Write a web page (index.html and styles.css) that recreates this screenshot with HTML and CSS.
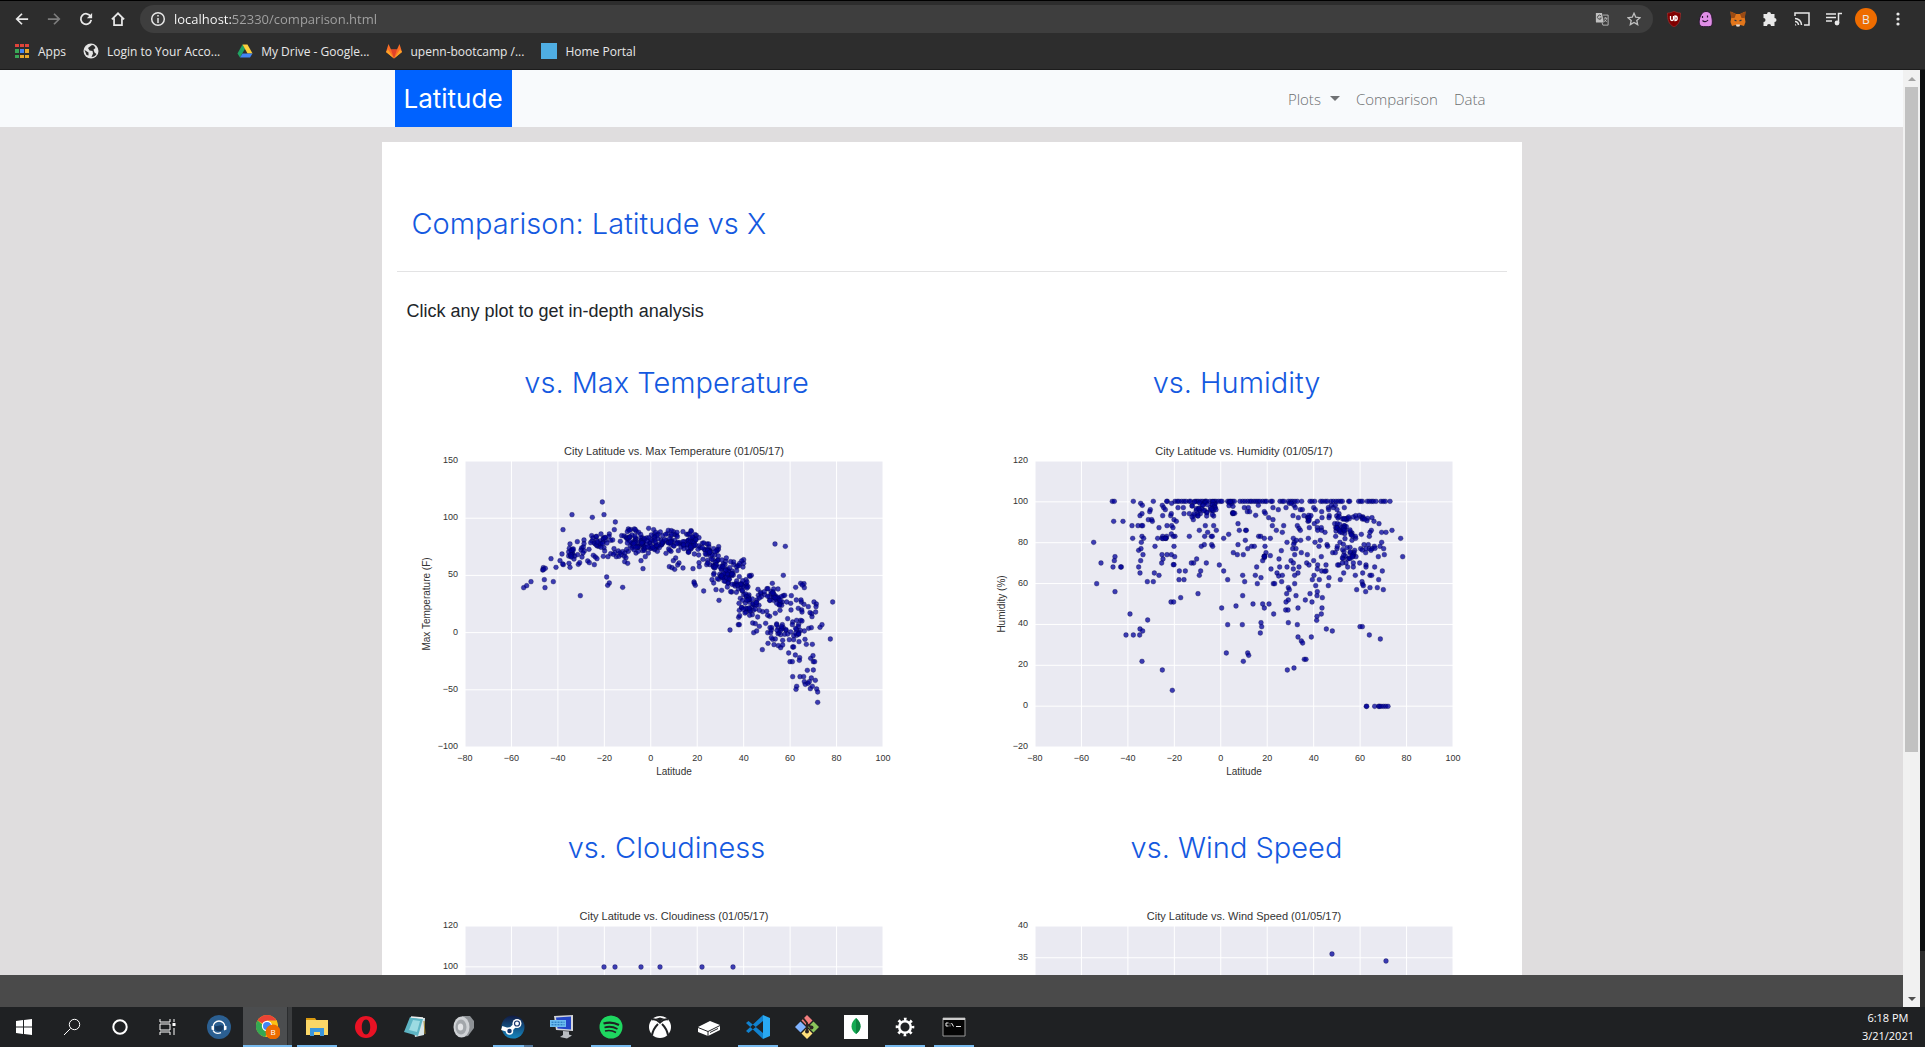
FILE: index.html
```html
<!DOCTYPE html>
<html lang="en">
<head>
<meta charset="utf-8">
<title>Latitude - Comparison</title>
<link rel="stylesheet" href="styles.css">
</head>
<body>
<header class="browser">
  <div class="toolbar">
    <button class="tool" aria-label="Back"><svg viewBox="0 0 16 16"><path d="M15 8H2M8 2L2 8l6 6" class="line"/></svg></button>
    <button class="tool dim" aria-label="Forward"><svg viewBox="0 0 16 16"><path d="M1 8h13M8 2l6 6-6 6" class="line"/></svg></button>
    <button class="tool" aria-label="Reload"><svg viewBox="0 0 16 16"><path d="M13.300 5A6 6 0 1 0 14 9" class="line"/><path d="M15 1v6H9z" fill="currentColor"/></svg></button>
    <button class="tool" aria-label="Home"><svg viewBox="0 0 16 16"><path d="M1 8.500L8 1.500l7 7M3.500 7v8h9V7" class="line"/></svg></button>
    <div class="omnibox">
      <svg class="info" viewBox="0 0 16 16"><circle cx="8" cy="8" r="6.300" class="line"/><path d="M8 7v5M8 4v1.600" class="line"/></svg>
      <input class="url" type="text" aria-label="Address" value="localhost:52330/comparison.html">
      <button class="tool soft" aria-label="Translate"><svg viewBox="0 0 16 16"><path d="M1 1h7l2 11H2a1 1 0 0 1-1-1z" fill="currentColor"/><path d="M9 3.500h6V15H9l-1-3" fill="none" stroke="currentColor"/><path d="M10 7h4M12 6v1M13.500 7c-.5 2-1.500 3-3 4M10.500 8.500l3 3" fill="none" stroke="currentColor"/><path d="M7 4.500A2.300 2.300 0 1 0 7.300 7H5.300" fill="none" stroke="#3c3c3c"/></svg></button>
      <button class="tool soft" aria-label="Bookmark this page"><svg viewBox="0 0 16 16"><path d="M8 1.500l2 4.500 4.800.5-3.600 3.200 1 4.800L8 12l-4.200 2.500 1-4.800L1.200 6.500 6 6z" fill="none" stroke="currentColor" stroke-width="1.500"/></svg></button>
    </div>
    <button class="tool" aria-label="uBlock"><svg viewBox="0 0 16 16"><path d="M8 0c2 1.500 4 2 6.500 2 0 7-1 11-6.500 14C2.500 13 1.500 9 1.500 2 4 2 6 1.500 8 0z" fill="#800000" stroke="#a33" stroke-width=".6"/><path d="M4.500 5v3a1.500 1.500 0 0 0 3 0V5M9 5v4.500a2.200 2.200 0 0 0 0-4.500z" fill="none" stroke="#fff" stroke-width="1.300"/></svg></button>
    <button class="tool" aria-label="Ghost"><svg viewBox="0 0 16 16"><path d="M8 .5c4 0 5.500 3 6 6.500.4 3 1 8-2 8.500-1.500.3-6.500.3-8 0C1 15 1 11 1.500 8 2.500 4 4.500.500 8 .500z" fill="#e08ee6" stroke="#2a1530"/><path d="M4.500 5v2M9.500 4.500v2M4.500 9.500c1.500 1.500 4 1.500 5.500-.5" fill="none" stroke="#2a1530" stroke-width="1.200"/></svg></button>
    <button class="tool" aria-label="MetaMask"><svg viewBox="0 0 16 16"><path d="M.5.5L6 3h4L15.500.500l-.7 6.500.7 4-1.500 4-3.500-1L8 15.800 5.500 14 2 15 .500 11l.7-4z" fill="#e2761b"/><path d="M.500.500L6 3 4.500 7 1.200 7zM15.500.500L10 3l1.500 4 3.300 0z" fill="#9a4a14"/><path d="M6 13.500h4l-.5 2h-3z" fill="#ddd"/><path d="M4.500 9l2 1M11.500 9l-2 1" stroke="#233447" stroke-width="1.300"/></svg></button>
    <button class="tool" aria-label="Extensions"><svg viewBox="0 0 16 16"><path d="M5 3a2 2 0 0 1 4 0h3.500v4a2 2 0 0 1 0 4v4H9a2 2 0 0 0-4 0H1.500v-4a2 2 0 0 0 0-4V3z" fill="currentColor"/></svg></button>
    <button class="tool" aria-label="Cast"><svg viewBox="0 0 16 16"><path d="M1 5V2h14v12h-5M1 7.500A6.500 6.500 0 0 1 7.500 14M1 10.500A3.500 3.500 0 0 1 4.500 14" fill="none" stroke="currentColor" stroke-width="1.500"/><path d="M1 12.500l1.500 2H1z" fill="currentColor"/></svg></button>
    <button class="tool" aria-label="Media"><svg viewBox="0 0 16 16"><path d="M0 3h10M0 6.500h10M0 10h6M12.500 12V2.500H16" fill="none" stroke="currentColor" stroke-width="1.500"/><circle cx="11" cy="12" r="2.400" fill="currentColor"/></svg></button>
    <button class="avatar" aria-label="Profile">B</button>
    <button class="tool" aria-label="Menu"><svg viewBox="0 0 16 16"><g fill="currentColor"><circle cx="8" cy="3" r="1.600"/><circle cx="8" cy="8" r="1.600"/><circle cx="8" cy="13" r="1.600"/></g></svg></button>
  </div>
  <nav class="bookmarks" aria-label="Bookmarks">
    <a href="#"><svg viewBox="0 0 16 16"><path d="M1 1h4v3H1zM6 1h4v3H6zM11 1h4v3h-4z" fill="#e0443a"/><path d="M1 6h4v4H1z" fill="#3aa757"/><path d="M6 6h4v4H6z" fill="#4285f4"/><path d="M11 6h4v4h-4zM11 12h4v3h-4zM6 12h4v3H6z" fill="#e8a92c"/><path d="M1 12h4v3H1z" fill="#3aa757"/></svg>Apps</a>
    <a href="#"><svg viewBox="0 0 16 16"><circle cx="8" cy="8" r="7.500" fill="#e4e4e4"/><path d="M9 2L5 5l1.500 2.500 3 .5.5 2.500L8.500 14c2 0 4-1 5-3l-2-1.500-1-3 2-1.500-1.500-2.500zM1.500 7l4 2.500v3L3.500 12z" fill="#2d2d2d"/></svg>Login to Your Acco...</a>
    <a href="#"><svg viewBox="0 0 16 16"><path d="M5.500 1.500L.500 10.500l2.500 4L8 5.800z" fill="#1fa463"/><path d="M5.500 1.500h5l5 9h-5z" fill="#fdcf3c"/><path d="M5.500 10.500h10l-2.500 4H3z" fill="#4285f4"/></svg>My Drive - Google...</a>
    <a href="#"><svg viewBox="0 0 16 16"><path d="M0 9L2.500 1 5 6.500h6L13.500 1 16 9l-8 6.500z" fill="#fc6d26"/><path d="M5 6.500h6L8 15.500z" fill="#e24329"/><path d="M0 9l8 6.500L2 6.500zM16 9l-8 6.500 6-9z" fill="#fca326"/></svg>upenn-bootcamp /...</a>
    <a href="#"><svg viewBox="0 0 16 16"><path d="M0 0h16v16H0z" fill="#4faee3"/></svg>Home Portal</a>
  </nav>
</header>

<div class="window">
  <div class="page">
    <div class="scroller">
      <nav class="navbar">
        <div class="container navbar-inner">
          <a class="brand" href="#">Latitude</a>
          <div class="links">
            <button class="link caret">Plots</button>
            <a class="link" href="#">Comparison</a>
            <a class="link" href="#">Data</a>
          </div>
        </div>
      </nav>
      <main class="container card">
        <h1>Comparison: Latitude vs X</h1>
        <p>Click any plot to get in-depth analysis</p>
        <div class="plots">
          <section><h2>vs. Max Temperature</h2><a href="#" aria-label="Max Temperature plot"><svg class="plot" id="temperature" viewBox="0 0 540 360"></svg></a></section>
          <section><h2>vs. Humidity</h2><a href="#" aria-label="Humidity plot"><svg class="plot" id="humidity" viewBox="0 0 540 360"></svg></a></section>
          <section><h2>vs. Cloudiness</h2><a href="#" aria-label="Cloudiness plot"><svg class="plot" id="cloudiness" viewBox="0 0 540 360"></svg></a></section>
          <section><h2>vs. Wind Speed</h2><a href="#" aria-label="Wind Speed plot"><svg class="plot" id="wind" viewBox="0 0 540 360"></svg></a></section>
        </div>
      </main>
    </div>
    <footer class="footer"></footer>
  </div>
  <div class="scrollbar"><i class="arrow up"></i><i class="thumb"></i><i class="arrow down"></i></div>
  <div class="edge"></div>
</div>

<footer class="taskbar">
  <div class="system">
    <button aria-label="Start"><svg viewBox="0 0 24 24"><path d="M4 6l7-1v6.500H4zM12 5l8-1v7.500h-8zM4 12.500h7V19l-7-1zM12 12.500h8V20l-8-1z" fill="#fff"/></svg></button>
    <button aria-label="Search"><svg viewBox="0 0 24 24"><circle cx="14.500" cy="9.500" r="5.200" class="thin"/><path d="M10.500 13.500L4 20" class="thin"/></svg></button>
    <button aria-label="Cortana"><svg viewBox="0 0 24 24"><circle cx="12" cy="12" r="6.700" fill="none" stroke="#fff" stroke-width="2"/></svg></button>
    <button aria-label="Task View"><svg viewBox="0 0 24 24"><path d="M4 4v3h10V4M4 9h10v6H4zM4 20v-3h10v3M18 4v3M18 13v7" class="thin"/><path d="M16.500 8h3v3h-3z" fill="#fff"/></svg></button>
  </div>
  <div class="apps">
    <button aria-label="TeamSpeak"><svg viewBox="0 0 24 24"><circle cx="12" cy="12" r="12" fill="#2b5f91"/><path d="M6 12a6 6 0 0 1 12 0" fill="none" stroke="#fff" stroke-width="1.300"/><path d="M4.500 11h2.500v4.500l-2.500-1zM19.500 11H17v4.500l2.500-1z" fill="#fff"/><path d="M8 11c2.500 1 5-2 8 0v3c-1 3-7 3-8 0z" fill="#173a60"/><path d="M6 15.500c2 3 5.500 3.300 8 2.200" fill="none" stroke="#fff" stroke-width="1.300"/></svg></button>
    <button class="active" aria-label="Chrome"><svg viewBox="0 0 24 24"><circle cx="11" cy="11" r="11" fill="#fbc116"/><path d="M11 11L1.500 5.500A11 11 0 0 1 20.500 5.500z" fill="#ea4335"/><path d="M1.500 5.500A11 11 0 0 0 9 22l4-7z" fill="#34a853"/><path d="M11 5.500h10V8H11z" fill="#fbc116"/><circle cx="11" cy="11" r="5.200" fill="#fff"/><circle cx="11" cy="11" r="4" fill="#4285f4"/><circle cx="17" cy="17" r="7.500" fill="#ee6c00"/><text x="17" y="20" text-anchor="middle" class="badge">B</text></svg></button>
    <button class="open" aria-label="File Explorer"><svg viewBox="0 0 24 24"><path d="M1 3h9l2 3h-11z" fill="#d99a10"/><path d="M1 5h22v15H1z" fill="#fbd767"/><path d="M5 13h14v8h-4v-4H9v4H5z" fill="#3a96dd"/></svg></button>
    <button aria-label="Opera"><svg viewBox="0 0 24 24"><path d="M12 1a11 11 0 1 0 0 22 11 11 0 0 0 0-22zm0 3.500c2.500 0 4.200 3.200 4.200 7.500s-1.700 7.500-4.200 7.500S7.800 16.300 7.800 12 9.500 4.500 12 4.500z" fill="#e81224" fill-rule="evenodd"/></svg></button>
    <button aria-label="Notepad"><svg viewBox="0 0 24 24"><path d="M8 2l14 1-1 17-9 2z" fill="#d9e6e8"/><path d="M7 2l13 2-5 17L1 17z" fill="#5eb5c4"/><path d="M10 5l7 1-3 11-8-2z" fill="#9cdbe2"/><path d="M8 2l12 1" stroke="#eee" stroke-width="1.500"/><path d="M21 6l1 13" stroke="#a5882e"/></svg></button>
    <button aria-label="Sound"><svg viewBox="0 0 24 24"><path d="M10 1h8l4 5v7l-6 8-6 1z" fill="#8d9195"/><ellipse cx="9.500" cy="12" rx="8" ry="10.500" fill="#cfd2d5"/><ellipse cx="9" cy="12" rx="5.500" ry="7.500" fill="#a3a7ab"/><ellipse cx="8.500" cy="12" rx="2.700" ry="3.500" fill="#e2e4e6"/></svg></button>
    <button class="open grouped" aria-label="Steam"><svg viewBox="0 0 24 24"><defs><linearGradient id="steam" x2="0" y2="1"><stop stop-color="#111a42"/><stop offset="1" stop-color="#1687c0"/></linearGradient></defs><circle cx="12" cy="12" r="11.500" fill="url(#steam)"/><path d="M.700 13l8 2.500 7-7" fill="none" stroke="#fff" stroke-width="4"/><circle cx="16" cy="8.500" r="4.500" fill="#fff"/><circle cx="16" cy="8.500" r="2.500" fill="#fff" stroke="#16366d" stroke-width="1.200"/><circle cx="8.500" cy="16" r="3" fill="#16366d" stroke="#fff" stroke-width="1.500"/></svg></button>
    <button aria-label="Remote Desktop"><svg viewBox="0 0 24 24"><path d="M4 1l19-1v16l-17-1z" fill="#d4d6da"/><path d="M6 2.500l15-1v13L7.500 13.500z" fill="#2346c8"/><path d="M0 5h16v7H0z" fill="#6cbcf0"/><path d="M1.500 7.200h13M1.500 9.800h13" stroke="#176bb5" stroke-dasharray="2 1"/><path d="M13 16l6 .5v3l3 1-5 3-7-1.500 3-2z" fill="#b9bcc1"/></svg></button>
    <button class="open" aria-label="Spotify"><svg viewBox="0 0 24 24"><circle cx="12" cy="12" r="11.500" fill="#1ed760"/><path d="M4.500 8.500c5-1.500 11-1 15.500 1.500" fill="none" stroke="#1f2123" stroke-width="2.200"/><path d="M5.500 12.500c4-1.200 9-.7 13 1.500" fill="none" stroke="#1f2123" stroke-width="1.800"/><path d="M6 16c3.500-1 7.500-.6 11 1.500" fill="none" stroke="#1f2123" stroke-width="1.500"/></svg></button>
    <button aria-label="Xbox"><svg viewBox="0 0 24 24"><circle cx="12" cy="12" r="11" fill="#fff"/><path d="M4 4.500c3-1 6 1 8 3 2-2 5-4 8-3M10 9C7 12 5 15 4 20M14 9c3 3 5 6 6 11" fill="none" stroke="#1f2123" stroke-width="2"/><path d="M7 4c2 0 4 1.500 5 3.500C13 5.500 15 4 17 4l-5-1.500z" fill="#1f2123"/></svg></button>
    <button aria-label="Drive"><svg viewBox="0 0 24 24"><path d="M1 12l12-6 10 4v5l-12 6-10-4z" fill="#fff"/><path d="M1 12.500l10 4 12-6M11 16.500V21M13 17.500l8-4" fill="none" stroke="#1f2123"/></svg></button>
    <button class="open" aria-label="Visual Studio Code"><svg viewBox="0 0 24 24"><path d="M17 0l7 3v18l-7 3z" fill="#29a9f2"/><path d="M0 8l2.500-2L17 18v6zM0 16l2.500 2L17 6V0z" fill="#1182cf"/></svg></button>
    <button aria-label="Git Bash"><svg viewBox="0 0 24 24"><path d="M12 0l5.500 5.500L12 11 6.500 5.500z" fill="#f27e7e"/><path d="M5.500 6.500L11 12l-5.500 5.500L0 12z" fill="#80b3ff"/><path d="M18.500 6.500L24 12l-5.500 5.500L13 12z" fill="#8bc55b"/><path d="M12 13l5.500 5.500L12 24l-5.500-5.500z" fill="#ffe07c"/><path d="M8 3l4 5v9M12 9l4 3" fill="none" stroke="#2b2321" stroke-width="2"/><circle cx="12" cy="16.500" r="2" fill="#2b2321"/><circle cx="16.500" cy="12.500" r="2" fill="#2b2321"/></svg></button>
    <button aria-label="MongoDB Compass"><svg viewBox="0 0 24 24"><path d="M0 0h24v24H0z" fill="#fff"/><path d="M12 3c3 3 4.500 5 4.500 8.500S14.500 17 12 19c-2.500-2-4.500-4-4.500-7.500S9 6 12 3z" fill="#13aa52"/><path d="M12 3c3 3 4.500 5 4.500 8.500S14.500 17 12 19z" fill="#0c8440"/></svg></button>
    <button class="open" aria-label="Settings"><svg viewBox="0 0 24 24"><circle cx="12" cy="12" r="5.800" fill="none" stroke="#fff" stroke-width="2.500"/><circle cx="12" cy="12" r="7.800" fill="none" stroke="#fff" stroke-width="3" stroke-dasharray="2.600 3.526" stroke-dashoffset="1.300"/></svg></button>
    <button class="open" aria-label="Command Prompt"><svg viewBox="0 0 24 24"><path d="M1 3h22v18H1z" fill="#050505" stroke="#999"/><path d="M1 3h22v2H1z" fill="#ccc"/><path d="M6.500 8H4v3h2.500M8 8.500v.8M8 10.500v.8M9.500 8l2 3.500M14 11.500h5" fill="none" stroke="#eee"/></svg></button>
  </div>
  <div class="clock"><span>6:18 PM</span><span>3/21/2021</span></div>
</footer>
<script src="plots.js"></script>
</body>
</html>
```
FILE: styles.css
```css
* { box-sizing: border-box; }
body {
  margin: 0;
  height: 100vh;
  display: flex;
  flex-direction: column;
  overflow: hidden;
  background: #dfddde;
  color: #212529;
  font-family: "Open Sans", "Noto Sans", sans-serif;
}
button { border: 0; padding: 0; background: none; color: inherit; font: inherit; }
a { color: inherit; text-decoration: none; }
svg { display: block; }
h1, h2, p { margin: 0; }
.line { fill: none; stroke: currentColor; stroke-width: 2; }
.thin { fill: none; stroke: #fff; stroke-width: 1; }

/* Browser toolbar */
.browser {
  flex: none;
  background: #2d2d2d;
  border-top: 1px solid #000;
  border-bottom: 1px solid #1c1c1c;
  color: #e8e8e8;
}
.toolbar { display: flex; align-items: center; height: 36px; padding: 0 11px 0 6px; }
.tool { display: grid; place-items: center; flex: none; width: 32px; height: 28px; }
.tool svg { width: 16px; height: 16px; }
.toolbar > .tool:nth-child(-n+4) svg { width: 14px; height: 14px; }
.dim { color: #7d7d7d; }
.soft { color: #c0c0c0; }
.omnibox {
  display: flex;
  align-items: center;
  flex: 1;
  height: 28px;
  margin: 0 5px 0 6px;
  padding: 0 3px 0 10px;
  border-radius: 14px;
  background: #3e3e3e;
}
.soft svg { width: 14px; height: 14px; }
.info { width: 16px; height: 16px; }
.info .line { stroke-width: 1.500; }
.url {
  flex: 1;
  height: 24px;
  margin-left: 8px;
  padding: 0;
  border: 0;
  background: linear-gradient(to right, #fff 59px, #a4a4a4 59px);
  background-clip: text;
  -webkit-background-clip: text;
  color: transparent;
  font-family: "Open Sans", sans-serif;
  font-size: 13px;
}
.avatar {
  flex: none;
  width: 22px;
  height: 22px;
  margin: 0 5px;
  border-radius: 50%;
  background: #ee6c00;
  font-size: 12px;
}
.bookmarks { display: flex; align-items: center; gap: 17px; height: 32px; padding: 0 14px 4px; font-size: 12px; }
.bookmarks a { display: flex; align-items: center; gap: 8px; white-space: nowrap; }
.bookmarks svg { width: 16px; height: 16px; }

/* Web page */
.window { display: flex; flex: 1; min-height: 0; }
.page { display: flex; flex-direction: column; flex: 1; }
.scroller { flex: 1; min-height: 0; overflow-y: auto; scrollbar-width: none; }
.container { width: 100%; max-width: 1140px; margin: 0 auto; }
.navbar { background: #f8fafc; }
.navbar-inner { display: flex; justify-content: space-between; align-items: center; padding: 0 28px 0 13px; }
.brand {
  padding: 0 9px;
  background: #0062ff;
  color: #fff;
  font: 400 26px/57px Inter, sans-serif;
}
.links { display: flex; }
.link { padding: 0 8px; color: #6c6e70; font-size: 15px; font-weight: 300; line-height: 24px; }
.caret { display: flex; align-items: center; gap: 9px; }
.caret::after { content: ""; border: 5px solid transparent; border-top-color: #707274; border-bottom: 0; }
.card { margin-top: 15px; padding: 62px 0 40px; background: #fff; }
h1, h2 { color: #1459e0; font: 300 29px/40px Inter, sans-serif; }
h1 { margin: 0 15px; padding: 0 15px 27px; border-bottom: 1px solid #e3e3e4; }
.card p { margin: 25px 25px 0; font: 18px/28px "Liberation Sans", Arial, sans-serif; }
.plots { display: grid; grid-template-columns: 1fr 1fr; row-gap: 43px; padding-top: 38px; }
.plots section { padding: 0 15px; }
.plots h2 { margin-bottom: 22px; text-align: center; }
.plot { width: 100%; fill: #333; font-family: "Liberation Sans", Arial, sans-serif; }
.plot .title { font-size: 11px; text-anchor: middle; }
.plot .label { font-size: 10px; text-anchor: middle; }
.plot .tick { font-size: 9px; text-anchor: middle; }
.plot .tick-y { font-size: 9px; text-anchor: end; }
.plot .area { fill: #eaeaf2; }
.plot .grid { stroke: #fff; }
.plot .dot { fill: #00009c; fill-opacity: .75; stroke: #000040; stroke-opacity: .6; stroke-width: .5; }
.footer { flex: none; height: 32px; background: #4a4a4a; }

.scrollbar { display: flex; flex-direction: column; align-items: center; width: 17px; background: #f1f1f1; }
.arrow { display: grid; place-items: center; width: 17px; height: 17px; }
.arrow::after { content: ""; border: 4px solid transparent; }
.up::after { border-bottom-color: #a3a3a3; border-top: 0; }
.down::after { border-top-color: #505050; border-bottom: 0; }
.thumb { width: 13px; height: 71%; margin-bottom: auto; background: #c1c1c1; }
.edge { width: 5px; background: linear-gradient(#0d0f10 94%, #2d2d2d 94%); }

/* Taskbar */
.taskbar { display: flex; flex: none; height: 40px; background: #1f2123; color: #fff; }
.system, .apps { display: flex; }
.system { margin-right: 2px; }
.taskbar button { position: relative; display: grid; place-items: center; width: 49px; height: 40px; }
.system button { width: 48px; }
.taskbar svg { width: 24px; height: 24px; }
.badge { font: 8px "Open Sans", sans-serif; fill: #fff; }
.open::after, .active::after {
  content: "";
  position: absolute;
  left: 5px;
  right: 4px;
  bottom: 0;
  height: 2px;
  background: #76b9ed;
}
.active { background: linear-gradient(to right, #4b4d4f 44px, #2b2d2f 44px, #2b2d2f 45px, #3b3d3f 45px); }
.active::after { left: 0; right: 0; }
.grouped::after { background: linear-gradient(to right, #76b9ed 31px, #53779a 31px); }
.clock {
  display: flex;
  flex-direction: column;
  align-items: center;
  margin-left: auto;
  padding: 2px 11px;
  font-size: 11px;
  line-height: 18px;
}
```
FILE: plots.js
```js
// Plot area inside each 540 x 360 figure.
const AREA = { left: 68, top: 36, width: 418, height: 286 };
const NS = "http://www.w3.org/2000/svg";

function add(svg, name, attrs, text) {
  const el = document.createElementNS(NS, name);
  for (const key in attrs) el.setAttribute(key, attrs[key]);
  if (text !== undefined) el.textContent = text;
  svg.appendChild(el);
}

const label = n => String(n).replace("-", "\u2212");

function draw(id, title, yTitle, min, max, step, points) {
  const svg = document.getElementById(id);
  const { left, top, width, height } = AREA;
  const mid = left + width / 2;
  add(svg, "rect", { class: "area", x: left, y: top, width, height });
  for (let v = -80; v <= 100; v += 20) {
    const x = left + (v + 80) / 180 * width;
    add(svg, "line", { class: "grid", x1: x, x2: x, y1: top, y2: top + height });
    add(svg, "text", { class: "tick", x, y: top + height + 14 }, label(v));
  }
  for (let v = min; v <= max; v += step) {
    const y = top + (max - v) / (max - min) * height;
    add(svg, "line", { class: "grid", x1: left, x2: left + width, y1: y, y2: y });
    add(svg, "text", { class: "tick-y", x: left - 7, y: y + 2 }, label(v));
  }
  add(svg, "text", { class: "title", x: mid, y: top - 6 }, "City Latitude vs. " + title + " (01/05/17)");
  add(svg, "text", { class: "label", x: mid, y: top + height + 28 }, "Latitude");
  const tx = id === "temperature" ? 33 : 38;
  add(svg, "text", { class: "label", transform: `translate(${tx} ${top + height / 2}) rotate(-90)` }, yTitle);
  for (const [cx, cy] of points) add(svg, "circle", { class: "dot", cx, cy, r: 2.4 });
}

// "x,y x,y" in thirds of a figure unit, shifted by the figure's own margin.
const parse = (text, dx, dy) => text.trim().split(/\s+/).map(p => {
  const [x, y] = p.split(",").map(Number);
  return [(x + dx) / 3, (y + dy) / 3];
});

// Repeatable samples for the crowded bands: [x0, y0, x1, y1, spread, count].
let seed = 7;
const rand = () => (seed = (seed * 16807) % 2147483647) / 2147483647;
const band = ([x0, y0, x1, y1, spread, count]) => Array.from({ length: count }, () => {
  const t = rand();
  const off = (rand() + rand() - 1) * spread;
  return `${Math.round(x0 + t * (x1 - x0))},${Math.round(y0 + t * (y1 - y0) + off)}`;
}).join(" ");

const temperature = `371,470 380,464 393,452 435,470 433,446 460,452 430,410 428,417 436,412 430,416 453,383 468,409 480,389 486,369 490,401 488,399 507,397 510,409
489,296 516,251 577,259 607,213 612,251 646,273 643,296 541,494 620,438 628,456 623,463 668,469 729,413 723,389 736,377 532,332 552,327 510,339 508,352
517,355 515,362 518,370 506,375 513,376 522,384 524,375 516,366 519,359 512,372 533,371 545,351 543,357 550,348 553,360 549,366 546,378 535,400 539,395 563,390 568,395
583,401 580,373 586,378 591,383 567,355 552,338 575,314 579,321 576,330 588,317 603,309 585,338 592,345 600,340 608,334 610,322 617,327 600,330 590,328
597,346 612,350 614,360 610,376 624,377 632,368 628,309 627,316 632,328 638,327 642,353 645,365 649,377 640,370 655,360 660,366 657,376 664,371 668,362
675,366 673,376 678,380 674,392 683,397 685,361 661,331 665,314 672,315 685,294 692,296 709,301 678,318 683,325 690,318 708,366 715,361 761,296 774,309
820,302 802,308 825,311 798,367 827,381 820,389 837,396 833,402 808,407 816,410 824,415 849,411 879,413 898,407 897,395 920,401 882,453 886,463 883,457
911,480 936,446 941,456 948,476 957,508 956,347 921,339 860,310 1125,339 1156,346 1150,433 1117,457 1134,474 1054,433 1187,469 1202,457 1212,458 1213,470
1207,462 1174,494 1298,513 1291,624 1266,581 1260,589 990,597 1015,581 1018,581 1087,656 1061,605 1104,637 1118,625 1122,641 1126,624 1135,644 1142,650
1148,642 1148,628 1166,666 1186,672 1178,648 1181,648 1199,680 1198,688 1170,692 1177,692 1232,682 1239,674 1240,692 1244,692 1222,718 1240,717 1178,737
1200,737 1211,737 1234,741 1246,748 1213,752 1216,760 1224,757 1228,752 1190,766 1188,775 1231,773 1237,766 1250,774 1253,783 1253,814 1219,640 1237,640
1197,632 1215,625 1168,626 1097,577 1103,605 1112,605 1130,579 1115,590 1135,590 1142,598 1150,590 1147,581 1158,598 1154,610 1163,563 1178,573 1177,581
1190,568 1196,580 1202,568 1206,570 1195,587 1201,598 1213,600 1226,592 1234,590 1236,557 1235,548 1247,543 1230,545 1242,513 1249,519 1248,527 1225,527
1212,520 1204,513 1203,507 1189,507 1195,532 1205,537 1206,543 1173,537 1172,517 1160,513 1150,494 1140,538 1126,547 1109,556 1103,553 1100,541 1088,542
1078,538 1073,558 1057,551 1058,576 1066,578 1078,586 1070,600 `
+ [[572, 330, 625, 328, 24, 12], [505, 366, 522, 366, 20, 5], [680, 328, 890, 332, 38, 140], [690, 346, 780, 342, 22, 22], [870, 324, 955, 388, 38, 54], [940, 412, 1005, 440, 30, 36],
   [965, 396, 1035, 400, 20, 16], [962, 450, 1052, 478, 52, 56], [1015, 530, 1078, 515, 34, 34], [1072, 484, 1155, 510, 30, 40],
   [1110, 596, 1200, 608, 32, 22]].map(band).join(" ");

const row = (xs, y) => xs.split(" ").map(x => x + "," + y).join(" ");
const humidity = row("397 403 460 520 562 560 585 592 597 605 612 618 628 632 645 650 655 662 668 675 677 680 690 697 703 708 715 722 726 743 748 753 758 763 780 788 795 803 810 815 822 828 834 840 848 855 860 873 877 900 907 912 925 932 938 945 952 965 990 996 1004 1022 1028 1036 1042 1053 1060 1068 1075 1082 1087 1106 1109 1136 1142 1147 1162 1168 1175 1180 1188 1203 1210 1216 1230", 211) + " "
+ row("1159 1160 1184 1196 1198 1203 1210 1217 1224", 826) + ` 341,334 363,396 350,458 401,271 429,271 405,377 403,389 399,408 424,408 422,408 405,482 450,549 438,612 460,612 479,612 480,594 488,600 486,691 547,717 577,778
503,567 502,452 520,452 458,322 456,284 474,284 485,284 488,284 482,217 487,223 480,254 486,248 511,236 509,242 505,266 515,266 517,271 484,334 486,316 491,322 476,358
483,353 489,371 482,389 476,408 480,426 523,426 537,433 537,290 525,346 533,322 546,322 558,322 560,316 548,316 546,371 549,384 545,396 561,371 574,371 584,377 582,346
574,309 585,316 580,401 582,401 573,513 581,513 602,500 598,420 616,420 597,446 612,446 654,488 662,420 658,433 650,384 641,396 634,396 664,346 673,341 695,341 698,346
674,316 694,316 697,316 628,316 658,298 676,284 701,284 709,298 683,304 679,396 718,402 731,420 731,322 743,446 746,310 725,531 743,581 739,666 768,525 788,494 787,581
788,433 794,452 760,365 772,371 790,371 774,341 796,328 803,353 815,346 823,346 774,278 778,298 797,298 799,298 830,408 826,433 832,458 843,440 848,389 855,346 858,365
836,316 842,316 853,322 871,322 819,519 848,519 867,519 853,531 843,575 845,587 841,606 790,691 803,666 806,673 881,549 880,458 884,458 873,414 897,384 904,359 889,298
907,304 911,284 877,284 891,426 896,435 907,433 905,452 899,408 921,408 921,334 943,334 940,322 941,340 962,328 949,328 938,353 944,371 948,353 964,365 982,371 933,389
940,396 957,408 940,414 954,426 944,433 944,458 980,396 987,402 985,322 1005,334 1021,328 1017,346 1001,389 1013,402 1012,414 1024,377 1038,402 1002,433 997,446 1007,464
1018,446 1047,440 1045,464 1038,420 1025,420 1034,421 925,470 928,476 920,488 925,507 918,513 948,494 917,537 924,537 954,531 925,575 952,581 954,618 964,630 968,636
994,618 973,685 978,685 942,711 922,717 976,507 996,513 990,488 1011,494 1012,482 1027,500 1026,531 1024,549 1011,556 1010,568 1039,594 1057,600 1081,446 1091,426
1126,433 1103,408 1120,408 1103,384 1098,396 1077,402 1087,396 1073,402 1058,365 1066,365 1041,341 1043,346 1071,353 1072,346 1080,334 1090,340 1116,328 1127,322 1126,316
1168,316 1174,298 1170,304 1144,310 1197,278 1182,271 1176,260 1205,304 1218,304 1236,298 1262,322 1268,377 1205,334 1200,346 1211,353 1213,371 1195,377 1207,420 1196,446
1192,470 1210,476 1184,408 1158,402 1158,408 1148,426 1170,433 1175,433 1146,452 1148,460 1150,464 1170,470 1157,482 1130,476 1140,587 1147,587 1168,612 1201,624
1139,396 1120,396 1128,377 1157,365 1165,341 1152,341 1183,346 1168,353 1176,353 1142,353 1147,357 1158,353 1173,358 1185,352 827,253 853,242 856,247 866,260 879,266 879,230
895,236 835,223 918,230 928,217 934,217 942,223 946,230 961,236 967,236 939,254 955,260 972,254 984,260 993,254 984,271 1003,278 988,290 1001,230 1006,236 1025,242 1026,260
1012,271 1045,230 1054,223 1060,230 1071,236 1066,223 1048,254 1047,260 1046,236 1093,230 952,284 957,292 961,298 1012,290 1024,290 1013,298 1025,298 1035,304 1077,248
802,242 793,230 805,230 809,242 547,223 551,230 556,236 575,217 548,254 572,254 574,248 582,266 589,271 561,284 575,284 579,290 580,316 594,230 610,230 612,248 628,248 640,266 653,254 661,248`
+ " " + [[635, 230, 705, 230, 34, 30], [655, 245, 720, 245, 24, 10], [745, 220, 760, 220, 12, 5], [755, 247, 772, 247, 3, 5], [1060, 292, 1100, 300, 26, 24], [1070, 258, 1165, 262, 12, 22], [1082, 366, 1125, 366, 30, 18], [972, 252, 988, 262, 10, 5], [1100, 290, 1120, 315, 12, 6], [852, 376, 872, 376, 8, 5], [546, 322, 560, 322, 2, 3]].map(band).join(" ");

draw("temperature", "Max Temperature", "Max Temperature (F)", -100, 150, 50, parse(temperature, 9, 18));
draw("humidity", "Humidity", "Humidity (%)", -20, 120, 20, parse(humidity, 39, 18));
draw("cloudiness", "Cloudiness", "Cloudiness (%)", -20, 120, 20,
  [[207, 77], [218, 77], [244, 77], [263, 77], [305, 77], [336, 77]]);
draw("wind", "Wind Speed", "Wind Speed (mph)", -5, 40, 5, [[365, 64], [419, 71]]);
```
